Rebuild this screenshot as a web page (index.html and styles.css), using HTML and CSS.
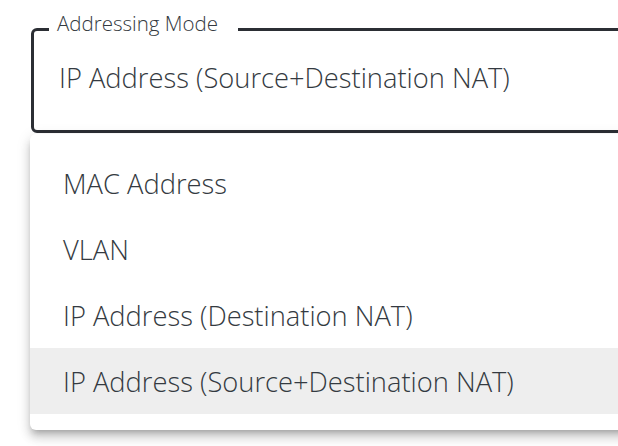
FILE: index.html
```html
<!DOCTYPE html>
<html>
<head>
<meta charset="utf-8">
<link rel="stylesheet" href="styles.css">
</head>
<body>
<div class="page">
  <fieldset class="select">
    <legend class="select-label">Addressing Mode</legend>
    <div class="select-value">IP Address (Source+Destination NAT)</div>
  </fieldset>
  <ul class="menu">
    <li class="menu-item">MAC Address</li>
    <li class="menu-item">VLAN</li>
    <li class="menu-item">IP Address (Destination NAT)</li>
    <li class="menu-item selected">IP Address (Source+Destination NAT)</li>
  </ul>
</div>
</body>
</html>
```
FILE: styles.css
```css
html, body {
  margin: 0;
  padding: 0;
  background: #ffffff;
  overflow: hidden;
}
body {
  width: 618px;
  height: 446px;
  font-family: "Open Sans", "Noto Sans", sans-serif;
  color: #343a41;
}
.page {
  position: relative;
  width: 618px;
  height: 446px;
  padding-top: 13px;
  box-sizing: border-box;
  overflow: hidden;
}
.select {
  margin: 0 0 0 31px;
  width: 640px;
  height: 120px;
  box-sizing: border-box;
  border: 3px solid #2b2e34;
  border-radius: 6px;
  padding: 0 0 0 25px;
}
.select-label {
  font-size: 20.5px;
  font-weight: 300;
  line-height: 20px;
  padding: 0 20px 12px 8px;
  margin-left: -10px;
  color: #343a41;
}
.select-value {
  font-size: 27.3px;
  font-weight: 300;
  line-height: 36px;
  margin-top: 15px;
}
.menu {
  position: absolute;
  left: 30px;
  top: 134px;
  width: 640px;
  margin: 0;
  padding: 16px 0;
  list-style: none;
  background: #ffffff;
  border-radius: 6px;
  box-shadow: 0 5px 6px -3px rgba(0,0,0,0.25), 0 8px 10px 1px rgba(0,0,0,0.12), 0 3px 14px 2px rgba(0,0,0,0.08);
}
.menu-item {
  height: 66px;
  display: flex;
  align-items: center;
  padding-left: 33px;
  font-size: 27.3px;
  font-weight: 300;
}
.menu-item.selected {
  background: #eeeeee;
}
```
